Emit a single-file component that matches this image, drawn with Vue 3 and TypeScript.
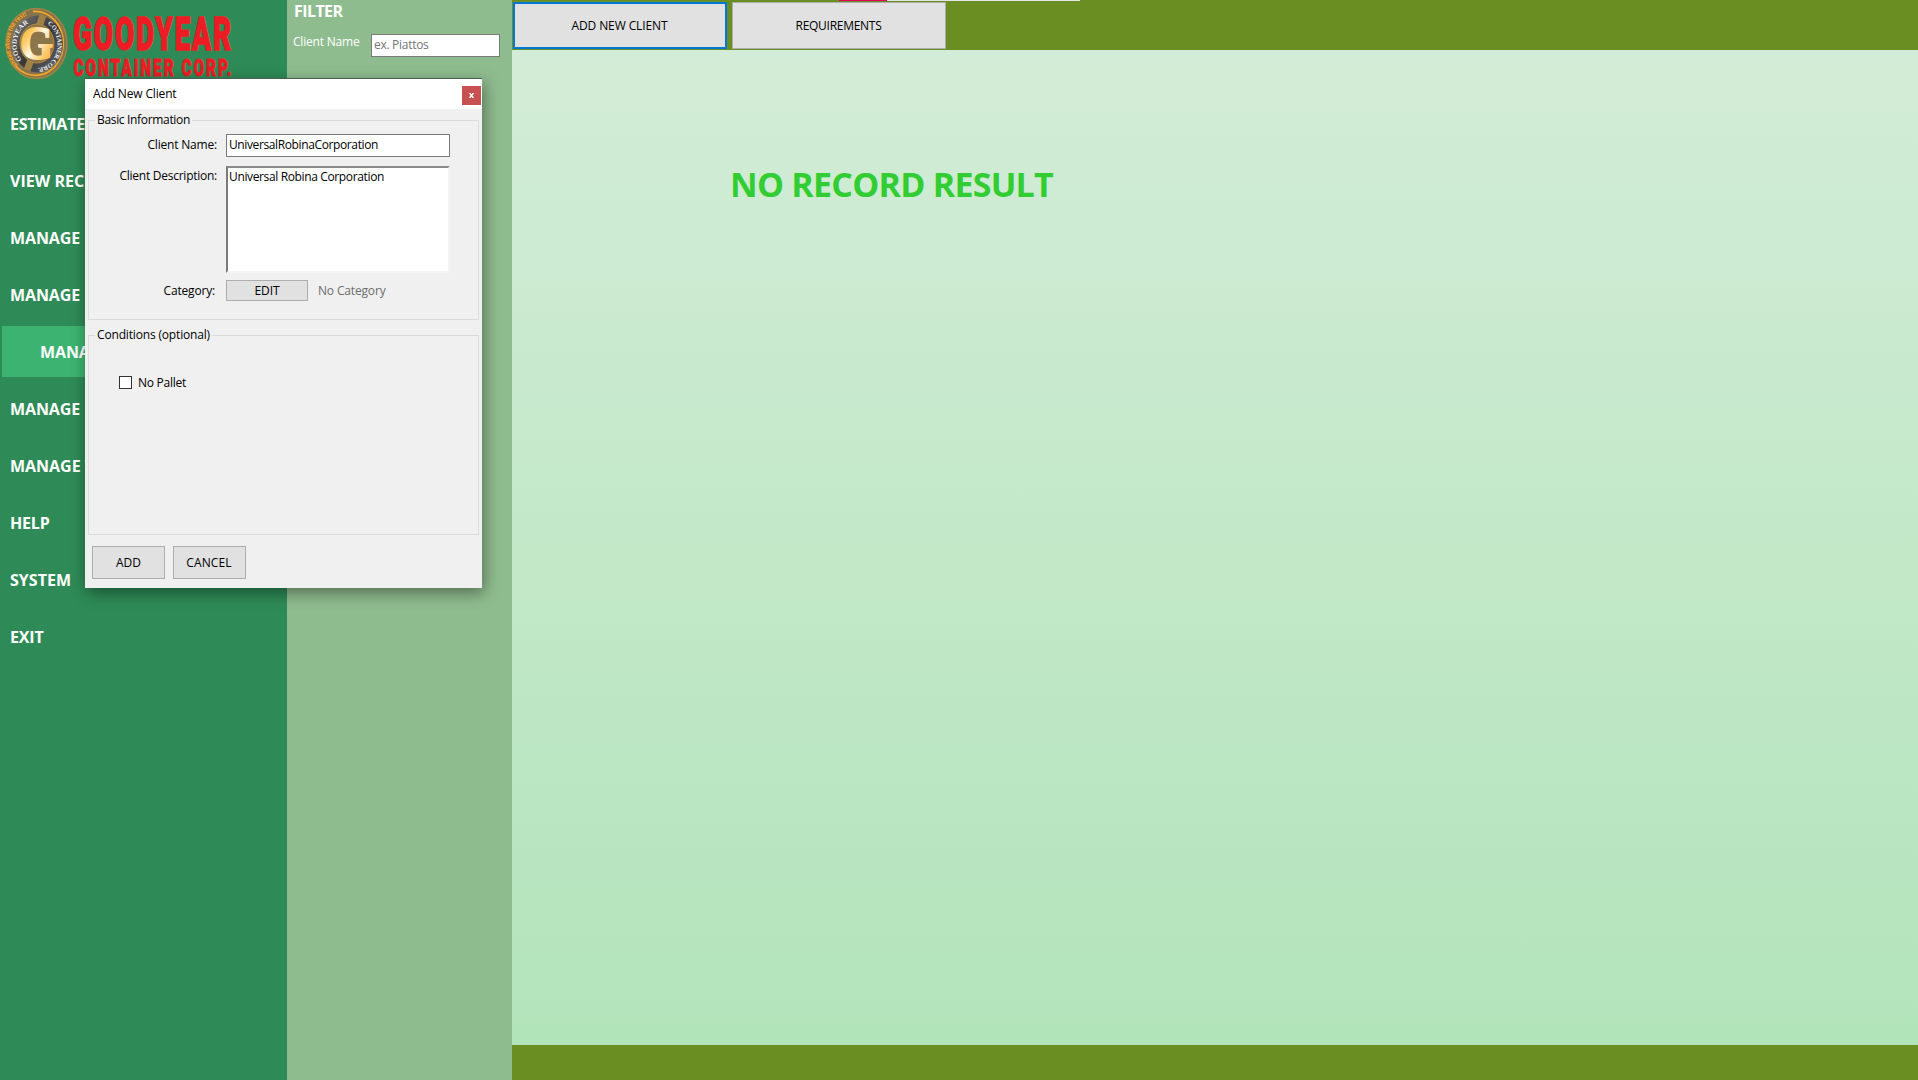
<script setup lang="ts">
interface MenuItem {
  label: string
  width: number
  active?: boolean
}

const menu: MenuItem[] = [
  { label: 'ESTIMATE', width: 75 },
  { label: 'VIEW RECO', width: 87 },
  { label: 'MANAGE', width: 70 },
  { label: 'MANAGE', width: 70 },
  { label: 'MANAGE', width: 70, active: true },
  { label: 'MANAGE', width: 70 },
  { label: 'MANAGE T', width: 84 },
  { label: 'HELP', width: 39.5 },
  { label: 'SYSTEM', width: 61 },
  { label: 'EXIT', width: 33.5 },
]

// Tracks a label so that its advance width equals the given number of pixels.
const vFit = {
  mounted(el: HTMLElement, binding: { value: number }) {
    const count = (el.textContent ?? '').length
    const natural = el.getBoundingClientRect().width
    el.style.letterSpacing = `${(binding.value - natural) / count}px`
  },
}
</script>

<template>
  <div class="app">
    <aside class="sidebar">
      <svg class="logo" width="287" height="98" viewBox="0 0 287 98">
        <defs>
          <linearGradient id="gold" x1="0" y1="0" x2="1" y2="1">
            <stop offset="0" stop-color="#f5a428" />
            <stop offset="0.3" stop-color="#ffc860" />
            <stop offset="0.5" stop-color="#fff8e6" />
            <stop offset="0.7" stop-color="#ffd07a" />
            <stop offset="1" stop-color="#f5a020" />
          </linearGradient>
          <linearGradient id="steel" x1="0" y1="0" x2="1" y2="1">
            <stop offset="0" stop-color="#77777a" />
            <stop offset="0.5" stop-color="#38383b" />
            <stop offset="1" stop-color="#66666a" />
          </linearGradient>
          <path id="arcMotto" d="M17.500 65A25.500 29.500 0 0 1 34 14" />
          <path id="arcLeft" d="M21.500 60A19.500 23 0 0 1 33 22" />
          <path id="arcRight" d="M47.500 24A20 23.500 0 0 1 34 67.500" />
        </defs>
        <ellipse cx="36.500" cy="43.500" rx="30.500" ry="35" fill="#85734d" stroke="#a58343" stroke-width="1.500" />
        <path d="M33 11.500A28 32 0 1 1 15.500 66" fill="none" stroke="#f2a82c" stroke-width="1.800" />
        <ellipse cx="38" cy="44" rx="25" ry="28.500" fill="url(#steel)" />
        <path d="M43 15L39 27M31 60L27 70" stroke="#a08248" stroke-width="7" />
        <ellipse cx="37" cy="43.500" rx="17" ry="19.500" fill="#8c754b" stroke="#b8893a" stroke-width="1" />
        <text class="motto"><textPath href="#arcMotto" textLength="58" lengthAdjust="spacingAndGlyphs">ahead above the rest!</textPath></text>
        <text class="ring"><textPath href="#arcLeft" textLength="42" lengthAdjust="spacingAndGlyphs">GOODYEAR</textPath></text>
        <text class="ring"><textPath href="#arcRight" textLength="57">CONTAINER CORP.</textPath></text>
        <text class="monogram" x="20" y="58.500" textLength="33" lengthAdjust="spacingAndGlyphs">G</text>
        <text class="brand" x="73" y="50" textLength="160" lengthAdjust="spacingAndGlyphs">GOODYEAR</text>
        <text class="brand small" x="73.500" y="76" textLength="160" lengthAdjust="spacingAndGlyphs">CONTAINER CORP.</text>
      </svg>
      <nav class="menu">
        <div v-for="(item, i) in menu" :key="i" class="item" :class="{ active: item.active }">
          <span v-fit="item.width">{{ item.label }}</span>
        </div>
      </nav>
    </aside>

    <section class="filter">
      <h2><span v-fit="48.5">FILTER</span></h2>
      <div class="filter-row">
        <label><span v-fit="66.5">Client Name</span></label>
        <div class="field placeholder"><span v-fit="54.5">ex. Piattos</span></div>
      </div>
    </section>

    <main class="content">
      <header class="toolbar">
        <button class="btn focused"><span v-fit="96">ADD NEW CLIENT</span></button>
        <button class="btn"><span v-fit="86">REQUIREMENTS</span></button>
        <div class="progress"></div>
      </header>
      <div class="records">
        <span v-fit="323" class="empty">NO RECORD RESULT</span>
      </div>
      <footer class="bottom"></footer>
    </main>

    <div class="dialog">
      <div class="titlebar">
        <span v-fit="83.5">Add New Client</span>
        <button class="close">
          <svg width="5" height="5" viewBox="0 0 5 5"><path d="M0.500 0L4.500 5M4.500 0L0.500 5" stroke="#fff" stroke-width="1.500" /></svg>
        </button>
      </div>
      <section class="group">
        <div class="legend"><span v-fit="93">Basic Information</span></div>
        <div class="row name">
          <label><span v-fit="69.5">Client Name:</span></label>
          <div class="field"><span v-fit="149">UniversalRobinaCorporation</span></div>
        </div>
        <div class="row description">
          <label><span v-fit="97.5">Client Description:</span></label>
          <div class="area"><span v-fit="155">Universal Robina Corporation</span></div>
        </div>
        <div class="row category">
          <label><span v-fit="51.5">Category:</span></label>
          <button class="btn edit"><span v-fit="25">EDIT</span></button>
          <span v-fit="67.5" class="muted">No Category</span>
        </div>
      </section>
      <section class="group second">
        <div class="legend"><span v-fit="113">Conditions (optional)</span></div>
        <div class="check">
          <i class="box"></i>
          <span v-fit="48">No Pallet</span>
        </div>
      </section>
      <div class="actions">
        <button class="btn"><span v-fit="25">ADD</span></button>
        <button class="btn cancel"><span v-fit="45.5">CANCEL</span></button>
      </div>
    </div>
  </div>
</template>

<style>
body {
  margin: 0;
  overflow: hidden;
}
</style>

<style scoped>
.app {
  position: relative;
  display: flex;
  width: 1918px;
  height: 1080px;
  overflow: hidden;
  font: 12px/16px 'Open Sans', 'Noto Sans', sans-serif;
  color: #000;
}
.app * {
  box-sizing: border-box;
}
span {
  display: inline-block;
  flex: none;
  white-space: pre;
}
button {
  padding: 0;
  font: inherit;
  color: inherit;
}

.sidebar {
  width: 287px;
  background: #2e8b57;
}
.logo {
  display: block;
}
.motto {
  font: bold 6px 'Open Sans', sans-serif;
  fill: #f9a81f;
}
.ring {
  font: bold 6.5px 'Liberation Serif', serif;
  fill: #f2f2f2;
}
.monogram {
  font: bold 46px 'Liberation Serif', serif;
  fill: url(#gold);
  stroke: url(#gold);
  stroke-width: 2;
}
.brand {
  font: 900 47px Roboto, 'Liberation Sans', sans-serif;
  letter-spacing: 3px;
  fill: #ed1c24;
  stroke: #ed1c24;
  stroke-width: 1.4;
}
.brand.small {
  font-size: 23px;
  letter-spacing: 3px;
  stroke-width: 0.8;
}
.menu {
  display: flex;
  flex-direction: column;
  gap: 6px;
  padding: 1px 2px 0;
}
.item {
  height: 51px;
  padding-left: 8px;
  color: #fff;
  font-size: 16px;
  font-weight: 700;
  line-height: 51px;
}
.item.active {
  margin: -1px 0 1px;
  padding-left: 38px;
  line-height: 53px;
  background: #3cb371;
}

.filter {
  width: 225px;
  background: #8fbc8f;
  color: #fff;
}
.filter h2 {
  height: 33px;
  margin: 0;
  padding-left: 7px;
  font-size: 16px;
  line-height: 23px;
}
.filter-row {
  display: flex;
  padding-left: 6px;
}
.filter-row label {
  width: 78px;
  padding-top: 1px;
}
.field {
  height: 23px;
  padding-left: 2px;
  border: 1px solid #7a7a7a;
  background: #fff;
  line-height: 19px;
}
.placeholder {
  width: 129px;
  margin-top: 1px;
  color: #757575;
  line-height: 20px;
}

.content {
  display: flex;
  flex: 1;
  flex-direction: column;
}
.toolbar {
  position: relative;
  display: flex;
  gap: 5px;
  height: 50px;
  padding: 2px 0 0 1px;
  background: #6b8e23;
}
.btn {
  display: flex;
  align-items: center;
  justify-content: center;
  border: 1px solid #adadad;
  background: #e1e1e1;
}
.toolbar .btn {
  width: 214px;
  height: 47px;
  padding-right: 1px;
}
.btn.focused {
  border: 2px solid #0078d7;
}
.progress {
  position: absolute;
  top: 0;
  left: 327px;
  width: 241px;
  height: 1px;
  background: linear-gradient(to right, #e6005c 48px, #e4e4e4 48px);
}
.records {
  flex: 1;
  padding: 114px 0 0 218px;
  background: linear-gradient(#d3ecd7, #b2e4ba);
}
.empty {
  color: #32cd32;
  font-size: 34px;
  font-weight: 700;
  line-height: 40px;
}
.bottom {
  height: 35px;
  background: #6b8e23;
}

.dialog {
  position: absolute;
  top: 78px;
  left: 85px;
  width: 397px;
  height: 510px;
  border-top: 1px solid #46614f;
  background: #f0f0f0;
  box-shadow: 2px 5px 15px rgba(0, 0, 0, 0.42);
}
.titlebar {
  display: flex;
  justify-content: space-between;
  height: 30px;
  padding: 0 1px 0 8px;
  background: #fff;
  line-height: 30px;
}
.close {
  display: flex;
  align-items: center;
  justify-content: center;
  width: 19px;
  height: 19px;
  margin-top: 7px;
  border: 0;
  background: #c75050;
}
.group {
  height: 200px;
  margin: 11px 3px 0;
  border: 1px solid #dcdcdc;
}
.group.second {
  margin-top: 15px;
}
.legend {
  width: fit-content;
  height: 15px;
  margin: -9px 0 0 6px;
  padding: 0 2px;
  background: #f0f0f0;
  line-height: 15px;
}
.row {
  display: flex;
}
.row label {
  display: flex;
  justify-content: flex-end;
  width: 128px;
  margin-right: 9px;
}
.name {
  margin-top: 7px;
  line-height: 21px;
}
.row .field {
  width: 224px;
}
.description {
  margin-top: 9px;
  line-height: 19px;
}
.area {
  width: 224px;
  height: 107px;
  padding-left: 1px;
  border: 2px solid;
  border-color: #8a8a8a #f5f5f5 #f5f5f5 #7c7c7c;
  background: #fff;
  line-height: 17px;
}
.category {
  margin-top: 7px;
  line-height: 21px;
}
.row.category label {
  width: 126px;
  margin-right: 11px;
}
.edit {
  width: 82px;
  height: 21px;
}
.muted {
  margin-left: 10px;
  color: #6d6d6d;
}
.check {
  display: flex;
  gap: 6px;
  margin: 34px 0 0 30px;
  line-height: 13px;
}
.box {
  width: 13px;
  height: 13px;
  border: 1px solid #333;
  background: #fff;
}
.actions {
  display: flex;
  gap: 8px;
  margin: 11px 0 0 7px;
}
.actions .btn {
  width: 73px;
  height: 33px;
}
.actions .cancel {
  padding-right: 1px;
}
</style>
